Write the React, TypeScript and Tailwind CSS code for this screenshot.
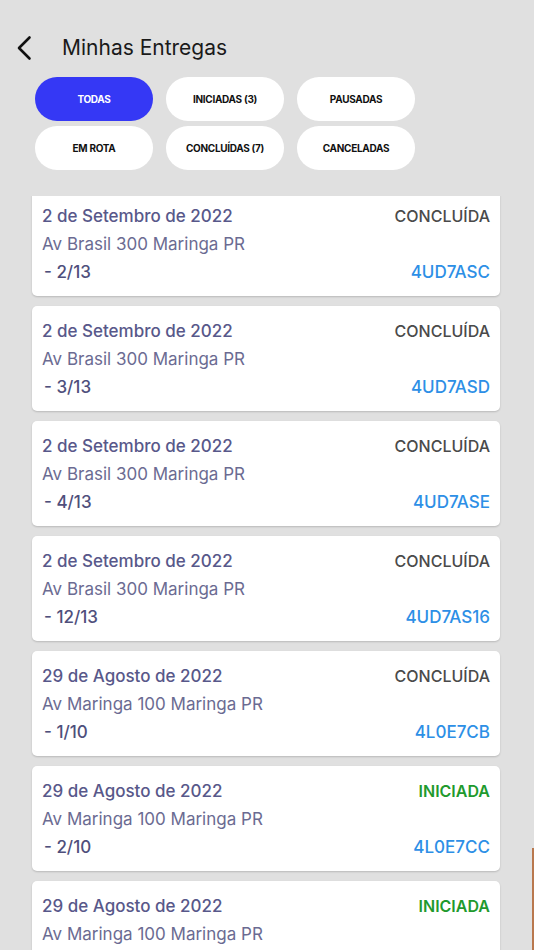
import React from 'react';

type Delivery = {
  date: string;
  address: string;
  seq: string;
  status: 'CONCLUÍDA' | 'INICIADA';
  code: string;
};

const filters = ['TODAS', 'INICIADAS (3)', 'PAUSADAS', 'EM ROTA', 'CONCLUÍDAS (7)', 'CANCELADAS'];

const deliveries: Delivery[] = [
  { date: '2 de Setembro de 2022', address: 'Av Brasil 300 Maringa PR', seq: '- 2/13', status: 'CONCLUÍDA', code: '4UD7ASC' },
  { date: '2 de Setembro de 2022', address: 'Av Brasil 300 Maringa PR', seq: '- 3/13', status: 'CONCLUÍDA', code: '4UD7ASD' },
  { date: '2 de Setembro de 2022', address: 'Av Brasil 300 Maringa PR', seq: '- 4/13', status: 'CONCLUÍDA', code: '4UD7ASE' },
  { date: '2 de Setembro de 2022', address: 'Av Brasil 300 Maringa PR', seq: '- 12/13', status: 'CONCLUÍDA', code: '4UD7AS16' },
  { date: '29 de Agosto de 2022', address: 'Av Maringa 100 Maringa PR', seq: '- 1/10', status: 'CONCLUÍDA', code: '4L0E7CB' },
  { date: '29 de Agosto de 2022', address: 'Av Maringa 100 Maringa PR', seq: '- 2/10', status: 'INICIADA', code: '4L0E7CC' },
  { date: '29 de Agosto de 2022', address: 'Av Maringa 100 Maringa PR', seq: '- 3/10', status: 'INICIADA', code: '4L0E7CD' },
];

const DeliveryCard: React.FC<{ item: Delivery }> = ({ item }) => (
  <div className="bg-white rounded-[5px] shadow-[0_1px_2px_rgba(0,0,0,0.18)] h-[105px] shrink-0 pl-[10px] pr-[10px] pt-[11px] text-[17px] leading-[28px]">
    <div className="flex justify-between">
      <span className="font-medium text-[#58588a]">{item.date}</span>
      <span className={item.status === 'INICIADA' ? 'text-[16px] font-semibold text-[#1f9a2e]' : 'text-[16px] font-medium text-[#4a4a4a]'}>
        {item.status}
      </span>
    </div>
    <div className="text-[#6b6b92]">{item.address}</div>
    <div className="flex justify-between">
      <span className="ml-[2px] font-medium text-[#4f4f7c]">{item.seq}</span>
      <span className="font-medium text-[#2d8fe6]">{item.code}</span>
    </div>
  </div>
);

export default function App() {
  return (
    <div className="relative w-[534px] h-[950px] overflow-hidden bg-[#e0e0e0] font-['Inter',sans-serif] flex flex-col">
      {/* header */}
      <div className="flex items-center h-[26px] mt-[35px]">
        <svg className="ml-[13px] w-[24px] h-[26px]" viewBox="0 0 24 26" fill="none">
          <path d="M16.5 2.5 L6 13 L16.5 23.5" stroke="#111" strokeWidth="2.6" strokeLinecap="round" strokeLinejoin="round" />
        </svg>
        <h1 className="ml-[25px] text-[21px] text-[#1a1a1a]">Minhas Entregas</h1>
      </div>

      {/* filters */}
      <div className="grid grid-cols-[118px_118px_118px] gap-x-[13px] gap-y-[5px] ml-[35px] mt-[16px]">
        {filters.map((f, i) => (
          <button
            key={f}
            className={
              'h-[44px] rounded-full text-[10px] font-bold tracking-[-0.3px] ' +
              (i === 0 ? 'bg-[#3538f5] text-white' : 'bg-white text-[#111]')
            }
          >
            {f}
          </button>
        ))}
      </div>

      {/* list */}
      <div className="mt-[26px] flex-1 overflow-hidden">
        <div className="-mt-[5px] flex flex-col gap-[10px] pl-[32px] pr-[34px] pb-4">
          {deliveries.map((d, i) => (
            <DeliveryCard key={i} item={d} />
          ))}
        </div>
      </div>

      <div className="absolute right-0 top-[848px] w-[2px] h-[102px] bg-[#b9784e]" />
    </div>
  );
}
